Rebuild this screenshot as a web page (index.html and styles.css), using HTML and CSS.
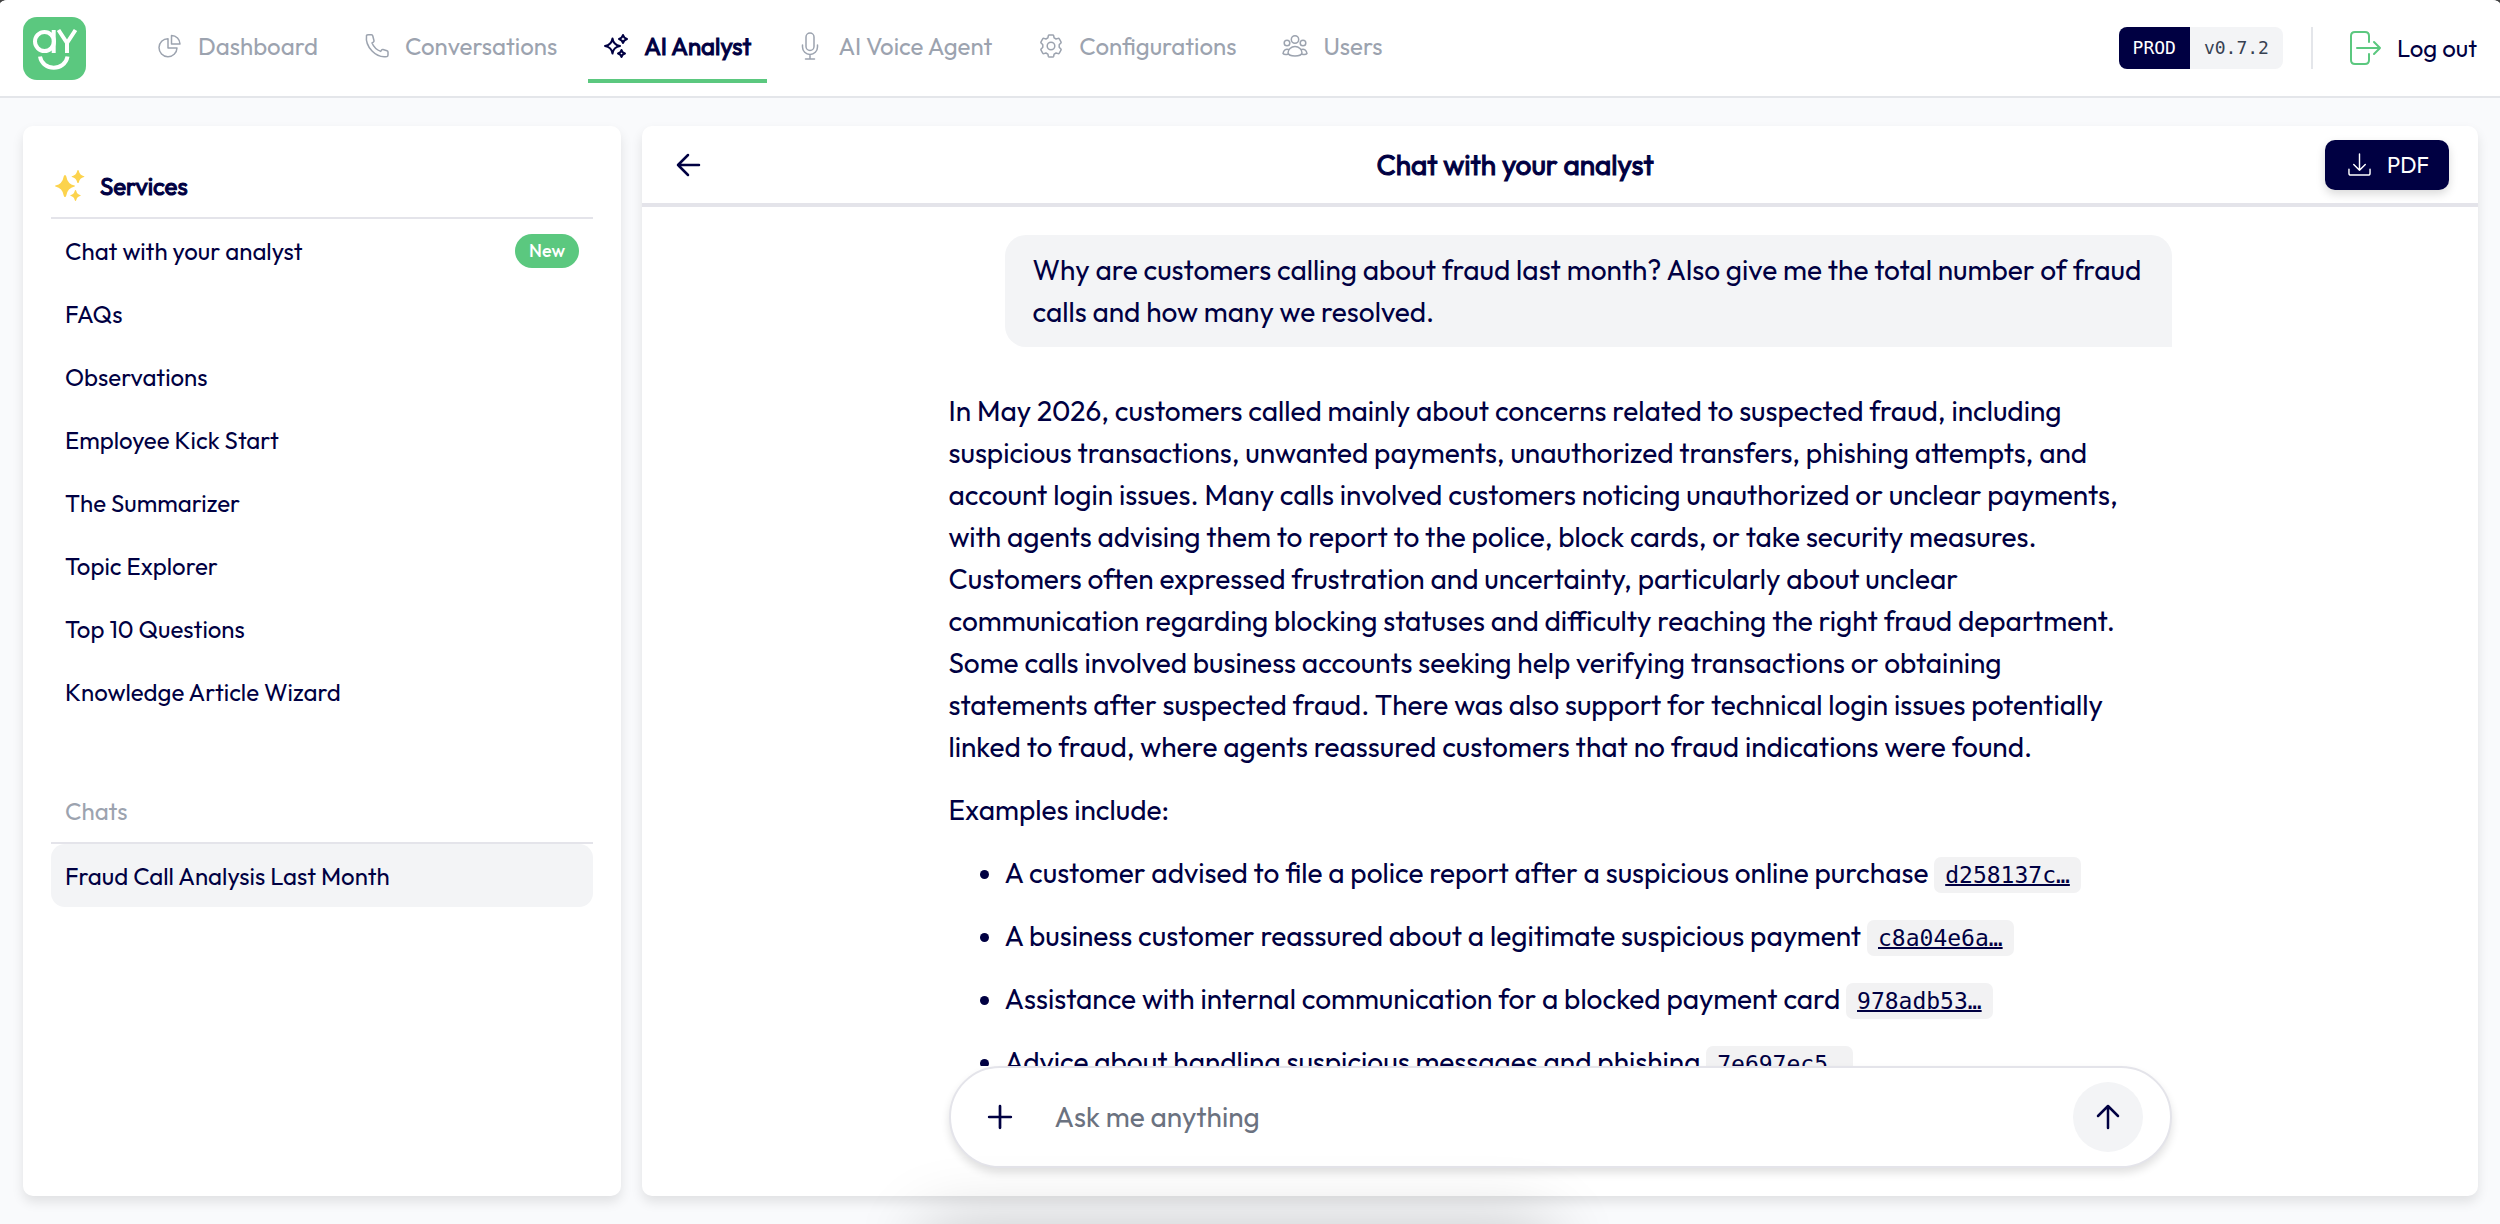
FILE: index.html
```html
<!DOCTYPE html>
<html lang="en">
<head>
  <meta charset="UTF-8">
  <meta name="viewport" content="width=device-width, initial-scale=1.0">
  <title>AI Analyst</title>
  <link rel="stylesheet" href="styles.css">
</head>
<body>
  <header class="topbar">
    <a href="#" class="logo" aria-label="Home">
      <svg viewBox="0 0 63 63">
        <circle cx="21.500" cy="24.500" r="9.500"/>
        <path d="M30.700 13v23M35.500 13l8.500 13M52.500 13L44 26v10"/>
        <path d="M17 39.500c2.500 15 25 15 27.500 0"/>
      </svg>
    </a>

    <nav class="nav">
      <a href="#" class="nav-link">
        <svg class="icon" viewBox="0 0 24 24"><path d="M10 4.200a9 9 0 1 0 9 9.300h-9z" transform="translate(0 .5)"/><path d="M13.500 1.500a8.500 8.500 0 0 1 8.500 8.500h-8.500z"/></svg>
        Dashboard
      </a>
      <a href="#" class="nav-link">
        <svg class="icon" viewBox="0 0 24 24"><path d="M1.500 1.500C0 13 11 24.500 22 22.500q1-.3 1-1.500v-3q0-1-1-1.300l-4-1.200q-1-.2-1.500.6l-.8 1.300C12 16 8.500 12.500 7 9l1.300-.8q.9-.6.700-1.500L7.800 2Q7.500.8 6.500.8h-3Q1.700.8 1.500 1.500z"/></svg>
        Conversations
      </a>
      <a href="#" class="nav-link active">
        <svg class="icon" viewBox="0 0 24 24"><path d="M8.500 4.500q1 6.500 7.500 7.500-6.500 1-7.500 7.500Q7.500 13 1 12q6.500-1 7.500-7.500zM19 1q.8 3 4 4-3.200 1-4 4-.8-3-4-4 3.200-1 4-4zM17.500 16q.6 2.700 3.500 3.500-2.900.8-3.500 3.500-.6-2.700-3.500-3.500 2.900-.8 3.500-3.500z"/></svg>
        AI Analyst
      </a>
      <a href="#" class="nav-link">
        <svg class="icon" viewBox="0 0 24 24"><rect x="8" y="-1" width="8" height="17.500" rx="4"/><path d="M4.500 11v2a7.500 7.500 0 0 0 15 0v-2M12 20.500V25M7.500 25h9"/></svg>
        AI Voice Agent
      </a>
      <a href="#" class="nav-link">
        <svg class="icon" viewBox="0 0 24 24"><circle cx="12" cy="12" r="3.800"/><path d="M10.300 1h3.400q.8 0 1 .8l.4 2 2 1.200 2-.6q.8-.2 1.200.5l1.700 2.900q.4.700-.2 1.300L20.200 10.800v2.400l1.600 1.700q.6.600.2 1.300l-1.700 2.900q-.4.700-1.200.5l-2-.6-2 1.200-.4 2q-.2.800-1 .8h-3.400q-.8 0-1-.8l-.4-2-2-1.200-2 .6q-.8.200-1.200-.5L2 16.200q-.4-.7.2-1.300l1.600-1.700v-2.400L2.200 9.100Q1.600 8.500 2 7.800l1.700-2.900q.4-.7 1.200-.5l2 .6 2-1.200.4-2q.2-.8 1-.8z"/></svg>
        Configurations
      </a>
      <a href="#" class="nav-link">
        <svg class="icon" viewBox="0 0 24 24"><circle cx="12" cy="5.500" r="3.700"/><circle cx="4" cy="9" r="2.800"/><circle cx="20" cy="9" r="2.800"/><path d="M12 12.500c-4 0-7 3-7 6.500 1 4 13 4 14 0 0-3.500-3-6.500-7-6.500zM5.500 15.500C3 14.500.5 16 0 19.500c1 1.200 3.500 1.200 5.500.5M18.500 15.500c2.500-1 5 .5 5.500 4-1 1.200-3.500 1.200-5.500.5"/></svg>
        Users
      </a>
    </nav>

    <div class="version">
      <span class="version-env">PROD</span>
      <span class="version-number">v0.7.2</span>
    </div>
    <button type="button" class="logout">
      <svg viewBox="0 0 32 36"><path d="M20 12V6q0-4-4-4H6Q2 2 2 6v24q0 4 4 4h10q4 0 4-4v-6M8 18h23M25 12l6 6-6 6"/></svg>
      Log out
    </button>
  </header>

  <div class="layout">
    <aside class="sidebar">
      <h2 class="sidebar-title">
        <svg viewBox="0 0 32 32"><path d="M12 5q1 0 1.300 1.500 1.200 7.500 8.200 9 1.500.5 0 1-7 1.500-8.200 9Q13 27 12 27t-1.300-1.500q-1.200-7.500-8.200-9-1.500-.5 0-1 7-1.500 8.200-9Q11 5 12 5zM25 0q.6 0 .9 1.200.9 4 5.100 5 1 .3 0 .7-4.200 1-5.100 5-.3 1.200-.9 1.200t-.9-1.200q-.9-4-5.100-5-1-.4 0-.7 4.200-1 5.100-5Q24.400 0 25 0zM22.500 20q.5 0 .8 1 .7 3.200 4.200 4.200 1 .3 0 .6-3.500 1-4.200 4.200-.3 1-.8 1t-.8-1q-.7-3.200-4.200-4.200-1-.3 0-.6 3.500-1 4.200-4.200.3-1 .8-1z"/></svg>
        Services
      </h2>
      <ul class="menu">
        <li><a href="#">Chat with your analyst <span class="badge">New</span></a></li>
        <li><a href="#">FAQs</a></li>
        <li><a href="#">Observations</a></li>
        <li><a href="#">Employee Kick Start</a></li>
        <li><a href="#">The Summarizer</a></li>
        <li><a href="#">Topic Explorer</a></li>
        <li><a href="#">Top 10 Questions</a></li>
        <li><a href="#">Knowledge Article Wizard</a></li>
      </ul>
      <h2 class="chats-title">Chats</h2>
      <ul class="menu">
        <li><a href="#" class="selected">Fraud Call Analysis Last Month</a></li>
      </ul>
    </aside>

    <main class="chat">
      <div class="chat-header">
        <button type="button" class="back" aria-label="Back">
          <svg viewBox="0 0 24 24"><path d="M23 12H2M12 2L2 12l10 10"/></svg>
        </button>
        <h1>Chat with your analyst</h1>
        <button type="button" class="pdf">
          <svg viewBox="0 0 24 24"><path d="M12 1v17M6 12l6 6 6-6M1 17v4q0 2 2 2h18q2 0 2-2v-4"/></svg>
          PDF
        </button>
      </div>

      <div class="messages">
        <div class="column">
          <p class="question">Why are customers calling about fraud last month? Also give me the total number of fraud calls and how many we resolved.</p>
          <div class="answer">
            <p>In May 2026, customers called mainly about concerns related to suspected fraud, including
              suspicious transactions, unwanted payments, unauthorized transfers, phishing attempts, and
              account login issues. Many calls involved customers noticing unauthorized or unclear payments,
              with agents advising them to report to the police, block cards, or take security measures.
              Customers often expressed frustration and uncertainty, particularly about unclear
              communication regarding blocking statuses and difficulty reaching the right fraud department.
              Some calls involved business accounts seeking help verifying transactions or obtaining
              statements after suspected fraud. There was also support for technical login issues potentially
              linked to fraud, where agents reassured customers that no fraud indications were found.</p>
            <p>Examples include:</p>
            <ul>
              <li>A customer advised to file a police report after a suspicious online purchase <a href="#" class="ref">d258137c…</a></li>
              <li>A business customer reassured about a legitimate suspicious payment <a href="#" class="ref">c8a04e6a…</a></li>
              <li>Assistance with internal communication for a blocked payment card <a href="#" class="ref">978adb53…</a></li>
              <li>Advice about handling suspicious messages and phishing <a href="#" class="ref">7e697ec5…</a></li>
            </ul>
          </div>
        </div>
      </div>

      <form class="composer">
        <button type="button" class="attach" aria-label="Add attachment">
          <svg viewBox="0 0 24 24"><path d="M12 2v20M2 12h20"/></svg>
        </button>
        <input type="text" placeholder="Ask me anything" aria-label="Message">
        <button type="submit" class="send" aria-label="Send">
          <svg viewBox="0 0 24 24"><path d="M12 23V1M2 11L12 1l10 10"/></svg>
        </button>
      </form>
    </main>
  </div>
</body>
</html>
```

FILE: styles.css
```css
* {
  box-sizing: border-box;
}

html {
  background: #444;
}

body {
  margin: 0;
  height: 100vh;
  display: flex;
  flex-direction: column;
  overflow: hidden;
  font-family: Outfit, Lato, sans-serif;
  font-size: 24px;
  color: #000042;
  background: #f9fafc;
  border-radius: 8px 8px 0 0 / 4px 4px 0 0;
}

/* soft shade along the bottom of the window */
body::after {
  content: "";
  position: fixed;
  top: 100%;
  left: 37%;
  width: 25%;
  height: 120px;
  box-shadow: 0 0 70px rgba(0, 0, 0, 0.2);
}

a {
  color: inherit;
  text-decoration: none;
}

button,
input {
  font: inherit;
  color: inherit;
  border: none;
  background: none;
  padding: 0;
}

button {
  cursor: pointer;
}

h1,
h2,
p,
ul {
  margin: 0;
  padding: 0;
}

h1,
h2 {
  font-weight: normal;
}

svg {
  flex: none;
  fill: none;
  stroke: currentColor;
  stroke-linecap: round;
  stroke-linejoin: round;
  overflow: visible;
}

/* top bar */
.topbar {
  flex: none;
  display: flex;
  align-items: center;
  height: 98px;
  padding: 0 23px;
  background: #fff;
  border-bottom: 2px solid #e4e6ea;
  border-radius: 8px 8px 0 0 / 4px 4px 0 0;
}

.logo {
  width: 63px;
  height: 63px;
  border-radius: 14px;
  background: #5bc87f;
}

.logo svg {
  display: block;
  stroke: #fff;
  stroke-width: 4;
  stroke-linecap: butt;
  stroke-linejoin: miter;
}

.nav {
  display: flex;
  gap: 15px;
  margin-left: 56px;
}

.nav-link {
  display: flex;
  align-items: center;
  gap: 16px;
  height: 70px;
  padding: 0 16px;
  border-bottom: 4px solid transparent;
  color: #9ca3af;
}

.nav-link.active {
  color: #000042;
  border-color: #5bc87f;
}

.icon {
  width: 24px;
  height: 24px;
  stroke-width: 1.5;
}

.active .icon {
  stroke-width: 2;
}

/* slightly heavier than the regular face, same advance widths */
.nav-link.active,
.sidebar-title,
.chat-header h1 {
  -webkit-text-stroke: 1px;
}

.version {
  display: flex;
  margin-left: auto;
  font-family: "DejaVu Sans Mono", monospace;
  font-size: 18px;
  line-height: 42px;
  border-radius: 8px;
  overflow: hidden;
}

.version-env {
  padding: 0 14px;
  color: #fff;
  background: #000042;
}

.version-number {
  padding: 0 14px;
  color: #374151;
  background: #f3f4f6;
}

.logout {
  display: flex;
  align-items: center;
  gap: 16px;
  height: 42px;
  margin-left: 28px;
  padding-left: 36px;
  border-left: 2px solid #e4e6ea;
}

.logout svg {
  width: 32px;
  height: 36px;
  stroke: #5bc87f;
  stroke-width: 2;
}

/* page body */
.layout {
  flex: 1;
  min-height: 0;
  display: flex;
  gap: 21px;
  padding: 28px 22px 28px 23px;
}

.sidebar,
.chat {
  background: #fff;
  border-radius: 10px;
  box-shadow: 0 6px 12px rgba(0, 0, 0, 0.1);
}

.sidebar {
  flex: none;
  width: calc(24vw - 2px);
  padding: 28px;
}

.sidebar-title,
.chats-title {
  display: flex;
  align-items: center;
  height: 65px;
  font-size: 24px;
  border-bottom: 2px solid #e4e4ea;
}

.sidebar-title {
  gap: 15px;
  padding-left: 2px;
}

.sidebar-title svg {
  width: 32px;
  height: 32px;
  fill: #fcd34d;
  stroke: none;
}

.chats-title {
  margin-top: 56px;
  padding-left: 14px;
  color: #9ca3af;
}

.menu {
  list-style: none;
}

.menu a {
  display: flex;
  align-items: center;
  justify-content: space-between;
  height: 63px;
  padding: 0 14px;
  border-radius: 14px;
}

.menu a.selected {
  background: #f3f4f6;
}

.badge {
  padding: 0 14px;
  font-size: 18px;
  font-weight: 500;
  line-height: 34px;
  color: #fff;
  background: #5bc87f;
  border-radius: 17px;
}

/* chat panel */
.chat {
  flex: 1;
  min-width: 0;
  display: flex;
  flex-direction: column;
  align-items: center;
  padding-bottom: 28px;
  font-size: 28px;
  line-height: 42px;
}

.chat-header {
  flex: none;
  align-self: stretch;
  display: flex;
  align-items: center;
  justify-content: space-between;
  height: 81px;
  padding: 0 29px;
  border-bottom: 4px solid #e4e4ea;
}

.chat-header h1 {
  font-size: 28px;
}

.back {
  display: flex;
  padding: 4px;
}

.back svg {
  width: 26px;
  height: 24px;
  stroke-width: 2.5;
}

.pdf {
  display: flex;
  align-items: center;
  gap: 16px;
  height: 50px;
  padding: 0 20px 0 23px;
  font-size: 22px;
  color: #fff;
  background: #000042;
  border-radius: 10px;
  box-shadow: 0 4px 10px rgba(0, 0, 0, 0.15);
}

.pdf svg {
  width: 23px;
  height: 23px;
  stroke-width: 1.5;
}

.messages {
  flex: 1;
  min-height: 0;
  align-self: stretch;
  overflow: hidden;
  padding-top: 28px;
}

.column,
.composer {
  width: calc(100% - 58px);
  max-width: 1223px;
  margin: 0 auto;
}

.question {
  margin: 0 0 43px 56px;
  padding: 14px 28px;
  background: #f3f4f6;
  border-radius: 21px 21px 0 21px;
}

.answer {
  padding-right: 42px;
}

.answer p {
  margin-bottom: 21px;
}

.answer ul {
  padding-left: 56px;
}

.answer li {
  margin-bottom: 21px;
}

.ref {
  padding: 5px 11px;
  font-family: "DejaVu Sans Mono", monospace;
  font-size: 23px;
  line-height: 28px;
  text-decoration: underline;
  text-decoration-thickness: 2px;
  background: #f2f2f3;
  border-radius: 7px;
}

.composer {
  flex: none;
  display: flex;
  align-items: center;
  height: 102px;
  padding: 0 27px 0 36px;
  background: #fff;
  border: 2px solid #e4e4ea;
  border-radius: 51px;
  box-shadow: 0 5px 8px rgba(0, 0, 0, 0.12);
}

.composer input {
  flex: 1;
  min-width: 0;
  outline: none;
}

.composer input::placeholder {
  color: #6b7280;
  opacity: 1;
}

.attach {
  display: flex;
  margin-right: 42px;
}

.attach svg {
  width: 26px;
  height: 26px;
  stroke-width: 2.5;
}

.send {
  display: flex;
  align-items: center;
  justify-content: center;
  width: 70px;
  height: 70px;
  background: #f3f4f6;
  border-radius: 50%;
}

.send svg {
  width: 24px;
  height: 24px;
  stroke-width: 2.5;
}
```
